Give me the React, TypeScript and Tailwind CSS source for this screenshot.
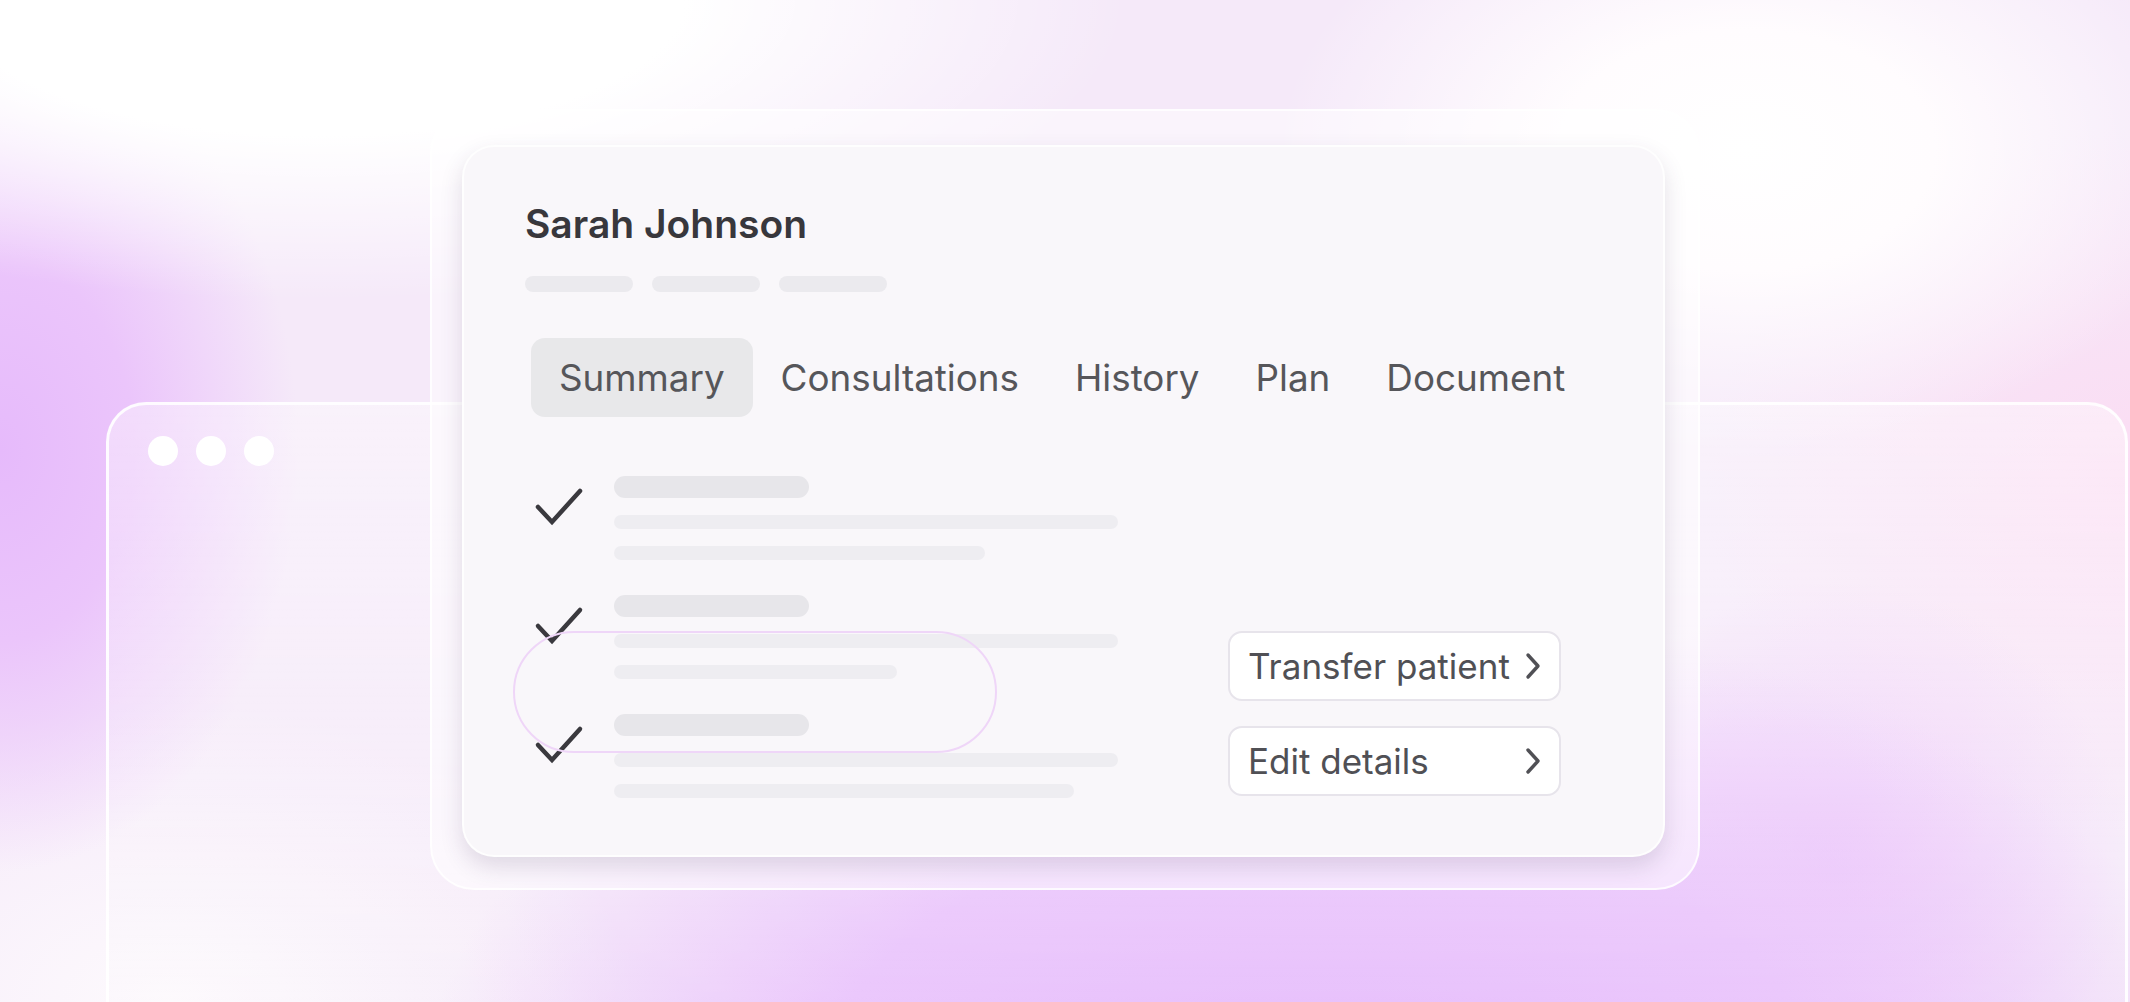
const tabs = ["Summary", "Consultations", "History", "Plan", "Document"];

// widths of the last skeleton line in each checklist row
const rows = [371, 283, 460];

function Check() {
  return (
    <svg width={50} height={40} viewBox="0 0 50 40" fill="none" className="mt-[10px] shrink-0">
      <polyline
        points="4,21 18,36 46,5"
        stroke="#3a393e"
        strokeWidth={4.5}
        strokeLinecap="round"
        strokeLinejoin="miter"
      />
    </svg>
  );
}

function Chevron() {
  return (
    <svg width={18} height={28} viewBox="0 0 18 28" fill="none" className="shrink-0">
      <polyline
        points="4,3 14,14 4,25"
        stroke="#505055"
        strokeWidth={3.4}
        strokeLinecap="round"
        strokeLinejoin="round"
      />
    </svg>
  );
}

function ChecklistRow({ lastWidth }: { lastWidth: number }) {
  return (
    <div className="flex flex-row items-start gap-[30px]">
      <Check />
      <div className="flex flex-col">
        <div className="h-[22px] w-[195px] rounded-full bg-[#e7e6ea]" />
        <div className="mt-[17px] h-[14px] w-[504px] rounded-full bg-[#eeedf1]" />
        <div
          className="mt-[17px] h-[14px] rounded-full bg-[#eeedf1]"
          style={{ width: lastWidth }}
        />
      </div>
    </div>
  );
}

function ActionButton({ label }: { label: string }) {
  return (
    <button className="flex h-[70px] w-[333px] flex-row items-center justify-between rounded-[14px] border-2 border-[#e7e4eb] bg-white pl-[18px] pr-[17px] text-[35px] text-[#505055]">
      <span className="leading-none">{label}</span>
      <Chevron />
    </button>
  );
}

function PatientCard() {
  return (
    <div className="relative h-[712px] w-[1203px] rounded-[32px] border-2 border-white/90 bg-[#f9f7fa] pl-[61px] pt-[53px] shadow-[0_10px_22px_rgba(70,50,90,0.15)]">
      <p className="text-[39px] font-semibold leading-[48px] text-[#38373c]">Sarah Johnson</p>

      <div className="mt-[28px] flex flex-row gap-[19px]">
        <div className="h-[16px] w-[108px] rounded-full bg-[#ebeaee]" />
        <div className="h-[16px] w-[108px] rounded-full bg-[#ebeaee]" />
        <div className="h-[16px] w-[108px] rounded-full bg-[#ebeaee]" />
      </div>

      <div className="ml-[6px] mt-[46px] flex flex-row">
        {tabs.map((t, i) => (
          <div
            key={t}
            className={`flex h-[79px] items-center rounded-[14px] px-[28px] text-[36.8px] text-[#56565a] ${
              i === 0 ? "bg-[#e8e8ea]" : ""
            }`}
          >
            {t}
          </div>
        ))}
      </div>

      <div className="mt-[59px] flex flex-row items-end">
        <div className="ml-[9px] flex flex-col gap-[35px]">
          {rows.map((w, i) => (
            <ChecklistRow key={i} lastWidth={w} />
          ))}
        </div>
        <div className="mb-[2px] ml-[110px] flex flex-col gap-[25px]">
          <ActionButton label="Transfer patient" />
          <ActionButton label="Edit details" />
        </div>
      </div>

      {/* faint outlined pill floating over the list */}
      <div className="pointer-events-none absolute left-[49px] top-[484px] h-[122px] w-[484px] rounded-full border-2 border-[#efd6f8]" />
    </div>
  );
}

export default function App() {
  return (
    <div
      className="relative h-[1002px] w-[2130px] overflow-hidden bg-[#f5e9f9] bg-[image:radial-gradient(ellipse_38%_30%_at_15%_0%,#ffffff_0%,#ffffff_45%,transparent_100%),radial-gradient(ellipse_22%_30%_at_82%_15%,#ffffff_0%,#fffcfe_40%,transparent_100%),radial-gradient(ellipse_14%_42%_at_0%_45%,#e6bafb_0%,#ebc5fb_45%,transparent_100%),radial-gradient(ellipse_42%_48%_at_62%_108%,#e5b9fc_0%,#e9c2fc_55%,transparent_100%),radial-gradient(ellipse_14%_28%_at_86%_86%,#edc5fa_0%,transparent_100%),radial-gradient(ellipse_20%_35%_at_100%_48%,#fbdcf3_0%,transparent_100%),radial-gradient(ellipse_22%_30%_at_8%_100%,#fdfafd_0%,transparent_100%)]"
      style={{ fontFamily: "Inter, 'Noto Sans', sans-serif" }}
    >
      {/* browser window behind */}
      <div className="ml-[106px] mt-[402px] h-[700px] w-[2022px] rounded-[40px] border-[3px] border-white/90 bg-linear-to-b from-white/40 to-white/5 pl-[39px] pt-[31px]">
        <div className="flex flex-row gap-[18px]">
          <div className="h-[30px] w-[30px] rounded-full bg-white" />
          <div className="h-[30px] w-[30px] rounded-full bg-white" />
          <div className="h-[30px] w-[30px] rounded-full bg-white" />
        </div>
      </div>

      {/* glass panel holding the card */}
      <div className="absolute left-[430px] top-[109px] h-[781px] w-[1270px] rounded-[44px] border-2 border-white/80 bg-white/50 pl-[30px] pt-[34px]">
        <PatientCard />
      </div>
    </div>
  );
}
